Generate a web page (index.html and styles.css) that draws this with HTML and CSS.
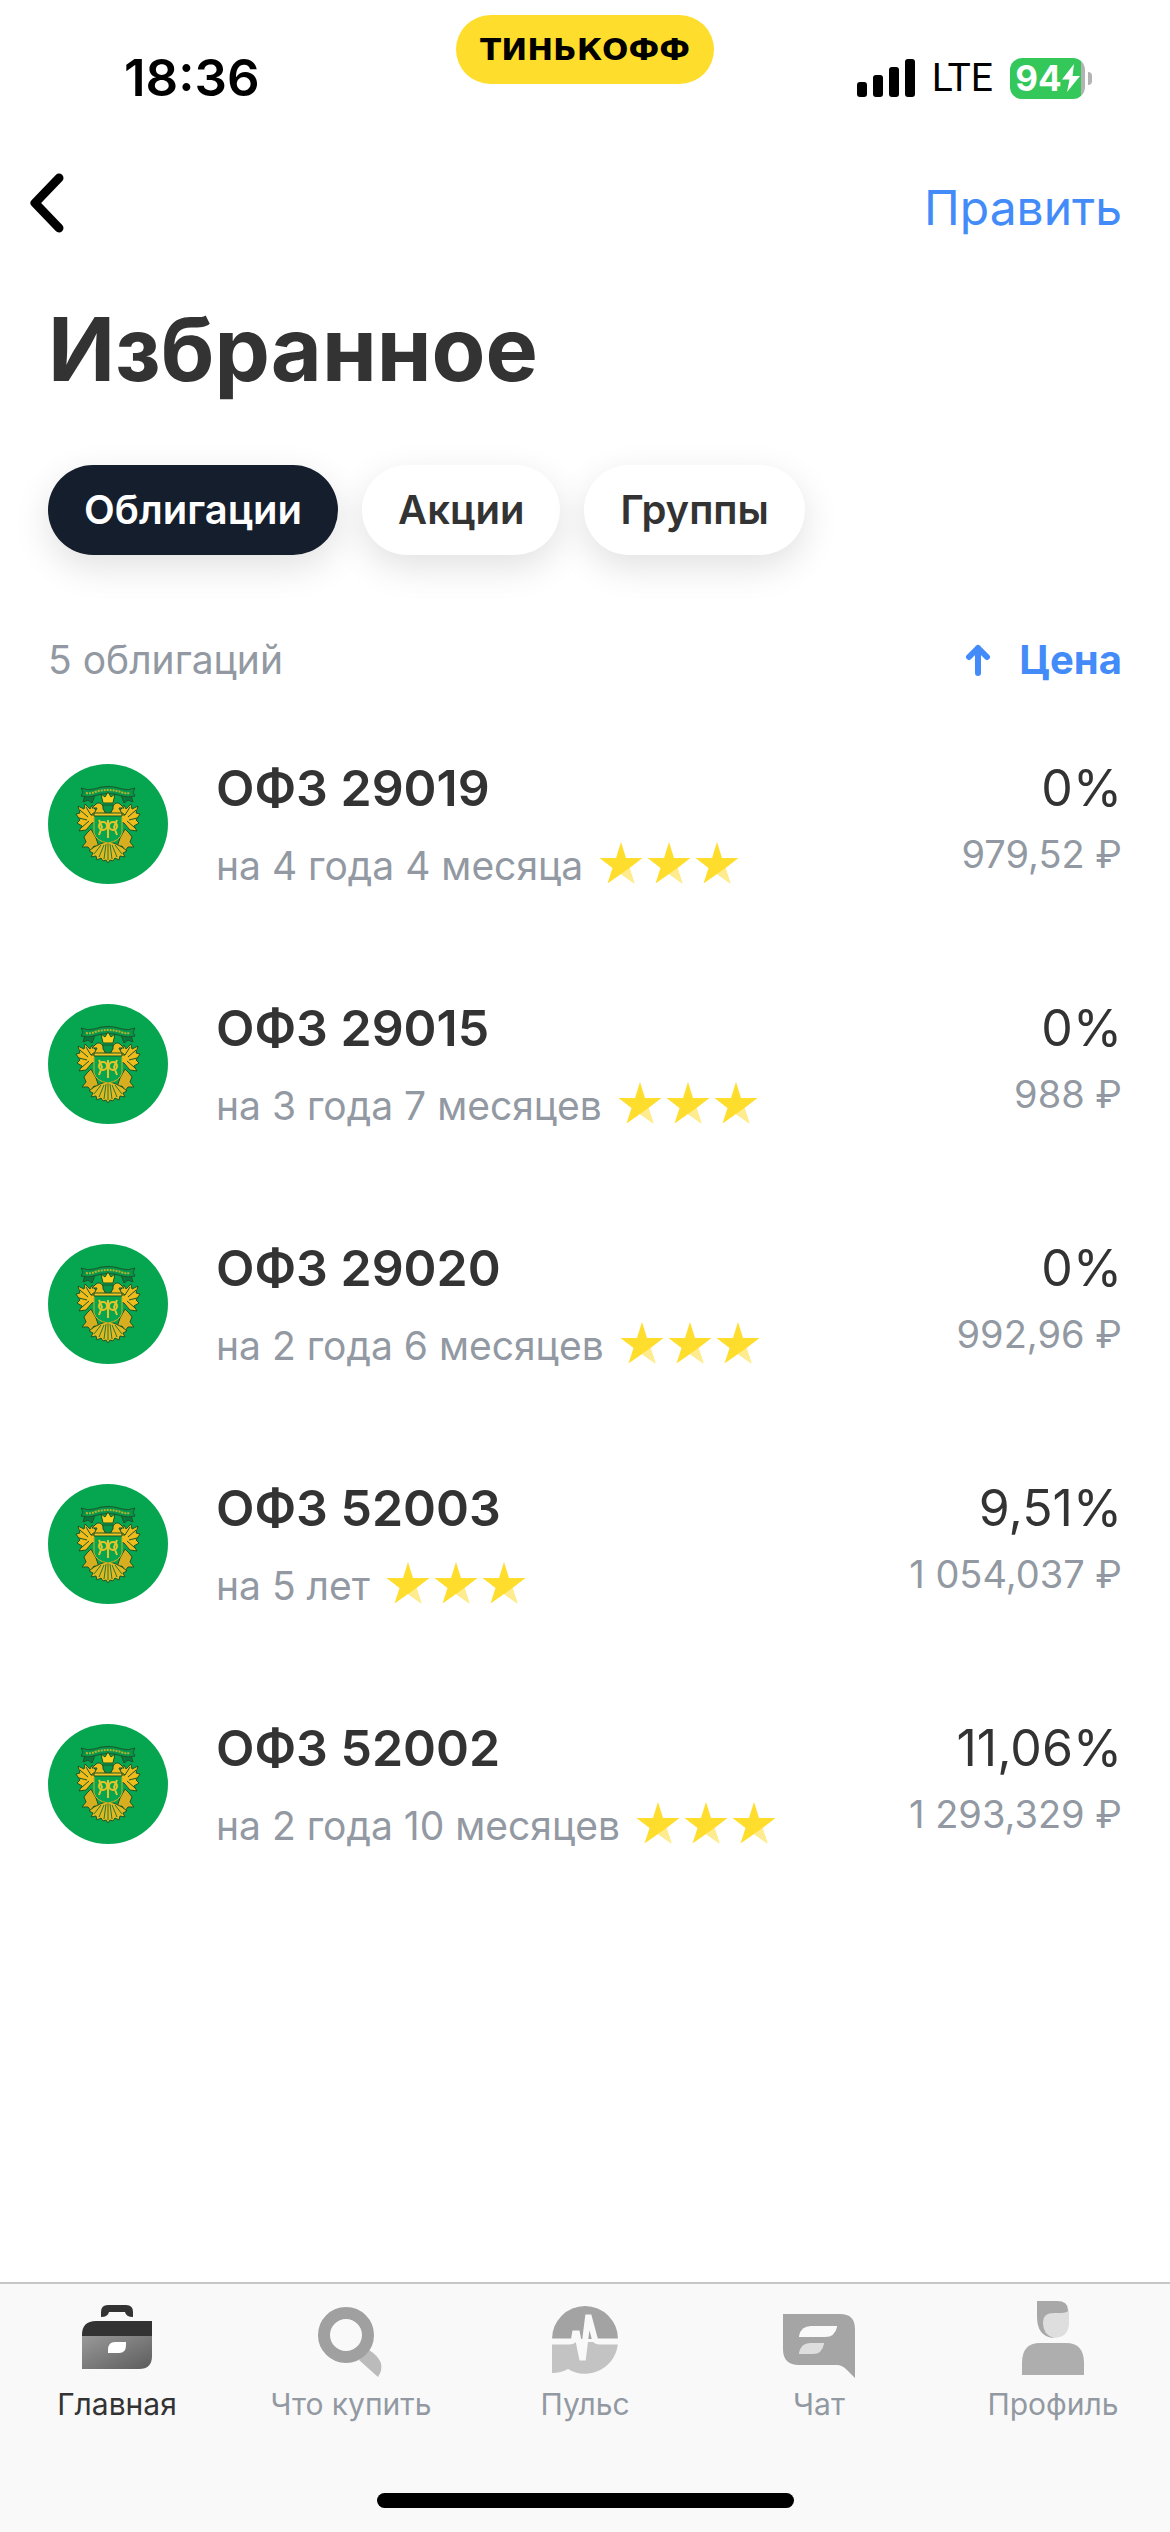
FILE: index.html
```html
<!DOCTYPE html>
<html lang="ru">
<head>
    <meta charset="UTF-8">
    <meta name="viewport" content="width=device-width, initial-scale=1.0">
    <title>Избранное</title>
    <link rel="stylesheet" href="styles.css">
</head>
<body>
    <!-- Shared graphics -->
    <svg class="sprite" aria-hidden="true">
        <symbol id="emblem" viewBox="0 0 120 120">
            <circle cx="60" cy="60" r="60" fill="#06a651"/>
            <g stroke="#1c5527" stroke-width="1" stroke-linejoin="round">
                <!-- ribbon -->
                <path d="M37 31l-2 7l5-2l4 3l3-8zM83 31l2 7l-5-2l-4 3l-3-8z" fill="#087a3e"/>
                <path d="M33 24q7 3 13 1q14-5 28 0q6 2 13-1l-2 4l2 4q-7 2-13 0q-14-5-28 0q-6 2-13 0l2-4z" fill="#07964b"/>
                <path d="M38 29q5 1 9-1q13-4 26 0q4 2 9 1" fill="none" stroke="#b5b52c" stroke-width="2" stroke-dasharray="2 1"/>
                <!-- wings -->
                <path d="M49 48l-5-7l-2 4l-5-5l-1 5l-6-3l2 7l-4 1l4 6l-3 3l5 3l-3 5l7-1l6-7l6-1z" fill="#eebc1c"/>
                <path d="M71 48l5-7l2 4l5-5l1 5l6-3l-2 7l4 1l-4 6l3 3l-5 3l3 5l-7-1l-6-7l-6-1z" fill="#eebc1c"/>
                <path d="M32 46l8 7M31 54l8 2M33 64l8-7M38 43l5 8M88 46l-8 7M89 54l-8 2M87 64l-8-7M82 43l-5 8" fill="none"/>
                <!-- heads and crown -->
                <path d="M58 51l-3-9q-3-5-7-2l-4 4l5 0l-2 4l-4 3z" fill="#eebc1c"/>
                <path d="M62 51l3-9q3-5 7-2l4 4l-5 0l2 4l4 3z" fill="#eebc1c"/>
                <path d="M53 30l4 3l3-5l3 5l4-3l-2 9h-10z" fill="#f6cf25"/>
                <path d="M55 41h10v4q-2 4-5 5q-3-1-5-5z" fill="#07964b"/>
                <!-- claws -->
                <path d="M43 65l-4 4l-3 4l2 5l-4 5l6 0l3 4l3-5l5 1l-3-9z" fill="#d7ae20"/>
                <path d="M77 65l4 4l3 4l-2 5l4 5l-6 0l-3 4l-3-5l-5 1l3-9z" fill="#d7ae20"/>
                <!-- tail -->
                <path d="M60 77l-8 3l-6 3l-5 4l4 2l-2 4l5-1l1 4l4-2l2 3l3-1l2 3l2-3l3 1l2-3l4 2l1-4l5 1l-2-4l4-2l-5-4l-6-3z" fill="#e0b81f"/>
                <path d="M60 79v17M56 81l-5 12M64 81l5 12M53 81l-7 9M67 81l7 9M58 80l-2 15M62 80l2 15" fill="none" stroke="#287838"/>
                <!-- shield -->
                <path d="M46 51h28v18q-2 8-14 10q-12-2-14-10z" fill="#06a651" stroke="#d7ae20"/>
                <path d="M46 49h28v3h-28z" fill="#f0c622"/>
            </g>
            <!-- monogram ornament -->
            <g fill="none" stroke="#e5c329" stroke-width="2">
                <circle cx="55" cy="62" r="4"/>
                <circle cx="65" cy="62" r="4"/>
                <path d="M51 56l3 7l-3 8M69 56l-3 7l3 8M60 56v18"/>
            </g>
        </symbol>
        <symbol id="star" viewBox="0 0 44 42">
            <path d="M22 0l5 16h16.500l-13 10l5 15.500l-13.500-9.500l-13.500 9.500l5-15.500l-13-10h16.500z" fill="#ffdd2d"/>
            <path d="M30.500 26l5 15.500l-13.500-9.500z" fill="#ffec91"/>
        </symbol>
        <symbol id="stars" viewBox="0 0 140 42">
            <use href="#star" x="0" y="0" width="44" height="42"/>
            <use href="#star" x="48" y="0" width="44" height="42"/>
            <use href="#star" x="96" y="0" width="44" height="42"/>
        </symbol>
    </svg>

    <div class="status-bar">
        <span class="time">18:36</span>
        <span class="brand">ТИНЬКОФФ</span>
        <div class="indicators">
            <svg class="signal" viewBox="0 0 58 38" aria-hidden="true">
                <rect x="0" y="23" width="10" height="15" rx="3"/>
                <rect x="16" y="16" width="10" height="22" rx="3"/>
                <rect x="32" y="8" width="10" height="30" rx="3"/>
                <rect x="48" y="0" width="10" height="38" rx="3"/>
            </svg>
            <span class="network">LTE</span>
            <div class="battery">
                <span class="battery-level">94</span>
                <svg class="bolt" viewBox="0 0 18 28" aria-hidden="true">
                    <path d="M12 0L0 15.500h7.500L5 28L18 12h-7.500z" fill="#fff"/>
                </svg>
            </div>
        </div>
    </div>

    <header class="nav">
        <button class="back" type="button" aria-label="Назад">
            <svg viewBox="0 0 36 60" aria-hidden="true">
                <path d="M31 5L7 30L31 55" fill="none" stroke="#000" stroke-width="9" stroke-linecap="round" stroke-linejoin="round"/>
            </svg>
        </button>
        <button class="edit" type="button">Править</button>
    </header>

    <main>
        <h1>Избранное</h1>

        <div class="filters">
            <button class="filter active" type="button">Облигации</button>
            <button class="filter" type="button">Акции</button>
            <button class="filter" type="button">Группы</button>
        </div>

        <div class="list-head">
            <span class="count">5 облигаций</span>
            <button class="sort" type="button">
                <svg viewBox="0 0 26 32" aria-hidden="true">
                    <path d="M13 29V4M4 13L13 4L22 13" fill="none" stroke="#428bf9" stroke-width="6" stroke-linecap="round" stroke-linejoin="round"/>
                </svg>
                Цена
            </button>
        </div>

        <ul class="bonds">
            <li class="bond">
                <svg class="logo" aria-hidden="true"><use href="#emblem"/></svg>
                <div class="info">
                    <span class="name">ОФЗ 29019</span>
                    <span class="term">на 4 года 4 месяца <svg class="stars" aria-hidden="true"><use href="#stars"/></svg></span>
                </div>
                <div class="values">
                    <span class="yield">0%</span>
                    <span class="price">979,52 ₽</span>
                </div>
            </li>
            <li class="bond">
                <svg class="logo" aria-hidden="true"><use href="#emblem"/></svg>
                <div class="info">
                    <span class="name">ОФЗ 29015</span>
                    <span class="term">на 3 года 7 месяцев <svg class="stars" aria-hidden="true"><use href="#stars"/></svg></span>
                </div>
                <div class="values">
                    <span class="yield">0%</span>
                    <span class="price">988 ₽</span>
                </div>
            </li>
            <li class="bond">
                <svg class="logo" aria-hidden="true"><use href="#emblem"/></svg>
                <div class="info">
                    <span class="name">ОФЗ 29020</span>
                    <span class="term">на 2 года 6 месяцев <svg class="stars" aria-hidden="true"><use href="#stars"/></svg></span>
                </div>
                <div class="values">
                    <span class="yield">0%</span>
                    <span class="price">992,96 ₽</span>
                </div>
            </li>
            <li class="bond">
                <svg class="logo" aria-hidden="true"><use href="#emblem"/></svg>
                <div class="info">
                    <span class="name">ОФЗ 52003</span>
                    <span class="term">на 5 лет <svg class="stars" aria-hidden="true"><use href="#stars"/></svg></span>
                </div>
                <div class="values">
                    <span class="yield">9,51%</span>
                    <span class="price">1 054,037 ₽</span>
                </div>
            </li>
            <li class="bond">
                <svg class="logo" aria-hidden="true"><use href="#emblem"/></svg>
                <div class="info">
                    <span class="name">ОФЗ 52002</span>
                    <span class="term">на 2 года 10 месяцев <svg class="stars" aria-hidden="true"><use href="#stars"/></svg></span>
                </div>
                <div class="values">
                    <span class="yield">11,06%</span>
                    <span class="price">1 293,329 ₽</span>
                </div>
            </li>
        </ul>
    </main>

    <footer class="bottom">
        <nav class="tabs">
            <a class="tab current" href="#home">
                <svg viewBox="0 0 80 80" aria-hidden="true">
                    <defs>
                        <linearGradient id="bag" x1="0" y1="0" x2="1" y2="1">
                            <stop offset="0" stop-color="#999"/>
                            <stop offset="1" stop-color="#5c5c5c"/>
                        </linearGradient>
                    </defs>
                    <path d="M24 17v-5q0-7 7-7h18q7 0 7 7v5q-7 0-8-5h-16q-1 5-8 5z" fill="#333"/>
                    <path d="M5 36v-1q0-14 14-14h56v15z" fill="#333"/>
                    <path d="M5 36h70v20q0 13-13 13h-57z" fill="url(#bag)"/>
                    <path d="M31 53v-3q0-8 7-8h11v3q0 8-7 8z" fill="#fff"/>
                </svg>
                Главная
            </a>
            <a class="tab" href="#invest">
                <svg viewBox="0 0 80 80" aria-hidden="true">
                    <path d="M48 60l10-10q19 12 9 27z" fill="#bbb"/>
                    <circle cx="35" cy="35" r="22" fill="none" stroke="#a0a0a0" stroke-width="12"/>
                </svg>
                Что купить
            </a>
            <a class="tab" href="#pulse">
                <svg viewBox="0 0 80 80" aria-hidden="true">
                    <path d="M7 39a33 33 0 0 1 66 0z" fill="#a3a3a3"/>
                    <path d="M7 42h66a33 33 0 0 1-50 27q-7 4-16 4z" fill="#c3c3c3"/>
                    <path d="M7 41.500h17q4 0 5-2l1-6h2l5 24h1l5-40h1l6 22q1 2 5 2h18" fill="none" stroke="#f9f9f9" stroke-width="6"/>
                </svg>
                Пульс
            </a>
            <a class="tab" href="#chat">
                <svg viewBox="0 0 80 80" aria-hidden="true">
                    <path d="M4 14h57q15 0 15 15v49l-8-8q-5-5-10-5h-38q-16 0-16-16z" fill="#a5a5a5"/>
                    <path d="M20 37v-1q2-10 12-10h26v1q-2 10-12 10z" fill="#f9f9f9"/>
                    <path d="M20 54v-1q2-10 11-10h14v1q-2 10-11 10z" fill="#dedede"/>
                </svg>
                Чат
            </a>
            <a class="tab" href="#profile">
                <svg viewBox="0 0 80 80" aria-hidden="true">
                    <path d="M24 1h20q11 0 11 9q0 12-15 13v15q-16-2-16-21z" fill="#a8a8a8"/>
                    <path d="M56 9v14q0 14-15 15q-11-3-11-15v-1q0-9 11-9h6q9 0 9-4z" fill="#dedede"/>
                    <path d="M9 75v-12q0-20 18-20h26q18 0 18 20v12z" fill="#aeaeae"/>
                </svg>
                Профиль
            </a>
        </nav>
        <div class="home-indicator"></div>
    </footer>
</body>
</html>
```
FILE: styles.css
```css
* {
    box-sizing: border-box;
}

body {
    font-family: Inter, "Liberation Sans", sans-serif;
    font-size: 39px;
    line-height: 48px;
    color: #333;
    background-color: #fff;
    display: flex;
    flex-direction: column;
    min-height: 100vh;
    margin: 0;
}

button {
    font: inherit;
    background: none;
    border: none;
    padding: 0;
    cursor: pointer;
}

svg {
    display: block;
}

.sprite {
    position: absolute;
    width: 0;
    height: 0;
}

/* Status bar */
.status-bar {
    display: grid;
    grid-template-columns: 1fr auto 1fr;
    align-items: center;
    height: 156px;
    color: #000;
}

.time {
    padding-left: 124px;
    font-size: 51px;
    font-weight: 600;
}

.brand {
    align-self: start;
    margin-top: 15px;
    padding: 0 24px;
    border-radius: 35px;
    background-color: #ffdd2d;
    font-family: "DejaVu Sans", sans-serif;
    font-size: 31px;
    font-weight: 700;
    line-height: 69px;
}

.indicators {
    display: flex;
    align-items: center;
    justify-content: flex-end;
    gap: 17px;
    padding-right: 78px;
}

.signal {
    width: 58px;
    height: 38px;
}

.network {
    font-family: Roboto, sans-serif;
}

.battery {
    position: relative;
    display: flex;
    align-items: center;
    justify-content: center;
    width: 75px;
    height: 41px;
    margin-right: 7px;
    border-radius: 12px;
    background: linear-gradient(to right, #34c759 71px, #b3b3b3 71px);
    color: #fff;
}

.battery::after {
    content: "";
    position: absolute;
    right: -7px;
    width: 4px;
    height: 13px;
    border-radius: 0 4px 4px 0;
    background-color: #b3b3b3;
}

.battery-level {
    font-size: 35px;
    font-weight: 700;
}

.bolt {
    width: 18px;
    height: 28px;
}

/* Navigation */
.nav {
    display: flex;
    justify-content: space-between;
    align-items: flex-start;
    margin-top: 17px;
    padding: 0 48px 0 28px;
}

.back svg {
    width: 36px;
    height: 60px;
}

.edit {
    font-size: 48px;
    line-height: 70px;
    color: #428bf9;
}

main {
    padding: 54px 48px 0;
}

h1 {
    margin: 0;
    font-size: 88px;
    font-weight: 700;
    line-height: 104px;
}

.filters {
    display: flex;
    gap: 24px;
    margin-top: 64px;
}

.filter {
    height: 90px;
    padding: 0 36px;
    border-radius: 45px;
    background-color: #fff;
    box-shadow: 0 12px 36px rgba(0, 0, 0, 0.12);
    color: #333;
    font-size: 40px;
    font-weight: 600;
}

.filter.active {
    background-color: #151e2c;
    color: #fff;
}

.list-head {
    display: flex;
    justify-content: space-between;
    margin-top: 81px;
    color: #9299a2;
}

.sort {
    display: flex;
    align-items: center;
    gap: 28px;
    color: #428bf9;
    font-size: 40px;
    font-weight: 700;
}

.sort svg {
    width: 26px;
    height: 32px;
}

/* Bond list */
.bonds {
    list-style: none;
    margin: 20px 0 0;
    padding: 0;
}

.bond {
    display: flex;
    align-items: center;
    gap: 48px;
    padding: 54px 0;
}

.logo {
    flex: none;
    width: 120px;
    height: 120px;
}

.info {
    flex: 1;
    display: flex;
    flex-direction: column;
    gap: 24px;
}

.name {
    font-size: 50px;
    font-weight: 600;
    line-height: 60px;
}

.term {
    display: flex;
    align-items: flex-start;
    gap: 16px;
    color: #9299a2;
}

.stars {
    width: 140px;
    height: 42px;
}

.values {
    align-self: flex-start;
    display: flex;
    flex-direction: column;
    gap: 12px;
    text-align: right;
}

.yield {
    font-size: 50px;
    line-height: 60px;
}

.price {
    font-size: 38px;
    color: #9299a2;
}

/* Bottom bar */
.bottom {
    margin-top: auto;
    padding-bottom: 24px;
    border-top: 2px solid #c6c6c8;
    background-color: #f9f9f9;
}

.tabs {
    display: grid;
    grid-template-columns: repeat(5, 1fr);
    padding-top: 16px;
}

.tab {
    display: flex;
    flex-direction: column;
    align-items: center;
    gap: 4px;
    color: #9299a2;
    font-size: 30px;
    line-height: 40px;
    text-decoration: none;
}

.tab.current {
    color: #333;
}

.tab svg {
    width: 80px;
    height: 80px;
}

.home-indicator {
    width: 417px;
    height: 15px;
    margin: 69px auto 0;
    border-radius: 8px;
    background-color: #000;
}
```
